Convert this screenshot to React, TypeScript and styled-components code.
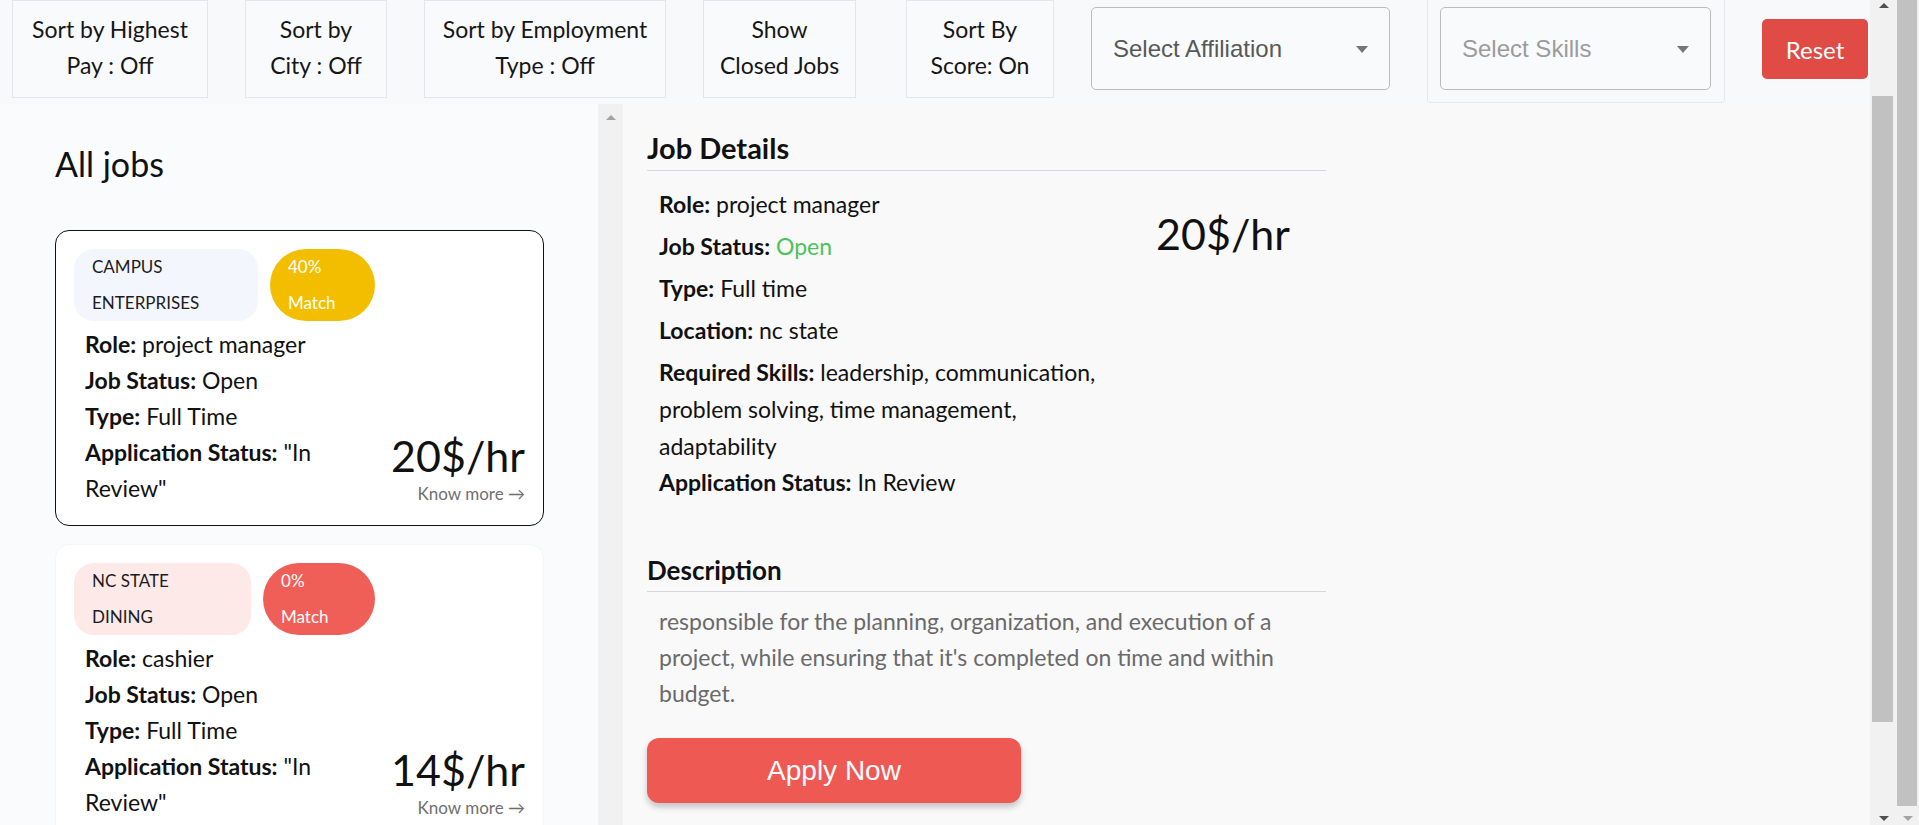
import React from 'react';
import styled, { createGlobalStyle } from 'styled-components';

interface Job {
  company: string;
  tagWidth: number;
  match: number;
  role: string;
  status: string;
  type: string;
  appStatus: string;
  pay: number;
}

const jobs: Job[] = [
  { company: 'CAMPUS ENTERPRISES', tagWidth: 184, match: 40, role: 'project manager', status: 'Open', type: 'Full Time', appStatus: '"In Review"', pay: 20 },
  { company: 'NC STATE DINING', tagWidth: 177, match: 0, role: 'cashier', status: 'Open', type: 'Full Time', appStatus: '"In Review"', pay: 14 },
];

const filters = [
  { label: 'Sort by Highest Pay : Off', width: 196, offset: 0 },
  { label: 'Sort by City : Off', width: 142, offset: 0 },
  { label: 'Sort by Employment Type : Off', width: 242, offset: 0 },
  { label: 'Show Closed Jobs', width: 153, offset: 0 },
  { label: 'Sort By Score: On', width: 148, offset: 13 },
];

const GlobalStyle = createGlobalStyle`
  body {
    margin: 0;
    font-family: Lato, "Noto Sans", sans-serif;
    color: #111;
    background: #f8f9fa;
  }
`;

const Shell = styled.div`
  display: flex;
  height: 100vh;
  overflow: hidden;
`;

const Page = styled.div`
  flex: 1;
  min-width: 0;
  display: flex;
  flex-direction: column;
  background: #f8f9fa;
`;

/* scrollbars, drawn to look like the browser's classic ones */
const Track = styled.div<{ $width: number }>`
  flex: 0 0 ${({ $width }) => $width}px;
  display: flex;
  flex-direction: column;
  background: #f1f1f1;
`;

const ArrowBox = styled.div<{ $height: number }>`
  flex: 0 0 ${({ $height }) => $height}px;
  display: flex;
  align-items: center;
  justify-content: center;
`;

const Arrow = styled.span<{ $down?: boolean; $color: string }>`
  width: 0;
  height: 0;
  border-left: 5px solid transparent;
  border-right: 5px solid transparent;
  ${({ $down, $color }) => ($down ? `border-top: 5px solid ${$color};` : `border-bottom: 5px solid ${$color};`)}
`;

const Thumb = styled.div<{ $top: number; $height: number; $inset: number }>`
  flex: 0 0 ${({ $height }) => $height}px;
  margin: ${({ $top }) => $top}px ${({ $inset }) => $inset + 2}px 0 ${({ $inset }) => $inset}px;
  background: #c1c1c1;
`;

const Filler = styled.div`
  flex: 1;
`;

const TopBar = styled.div`
  display: flex;
  align-items: flex-start;
  gap: 37px;
  flex: 0 0 104px;
  padding-left: 12px;
  box-sizing: border-box;
`;

const FilterButton = styled.button<{ $width: number; $offset: number }>`
  width: ${({ $width }) => $width}px;
  margin-left: ${({ $offset }) => $offset}px;
  height: 98px;
  padding: 0 14px 4px;
  border: 1px solid #e4e6ea;
  background: #f9fafb;
  font-family: Lato, "Noto Sans", sans-serif;
  font-size: 23px;
  line-height: 36px;
  color: #161616;
  text-align: center;
  cursor: pointer;
`;

const SelectBox = styled.div<{ $width: number; $placeholder?: boolean }>`
  width: ${({ $width }) => $width}px;
  height: 83px;
  margin-top: 7px;
  box-sizing: border-box;
  display: flex;
  align-items: center;
  justify-content: space-between;
  padding: 0 21px;
  border: 1px solid #bcbcbc;
  border-radius: 5px;
  background: #f9fafb;
  font-family: "Liberation Sans", Arial, sans-serif;
  font-size: 24px;
  color: ${({ $placeholder }) => ($placeholder ? '#9b9b9b' : '#585858')};
`;

const SelectFrame = styled.div`
  width: 298px;
  height: 103px;
  box-sizing: border-box;
  padding: 0 13px 0 12px;
  border: 1px solid #e6e8ec;
  border-top: none;
  border-radius: 0 0 4px 4px;

  ${SelectBox} {
    width: 100%;
  }
`;

const Caret = styled.span`
  width: 0;
  height: 0;
  border-left: 6.5px solid transparent;
  border-right: 6.5px solid transparent;
  border-top: 7px solid #767676;
  margin-top: 2px;
`;

const ResetButton = styled.button`
  width: 106px;
  height: 60px;
  margin-top: 19px;
  border: none;
  border-radius: 5px;
  background: #e04b45;
  color: #fff;
  font-family: Lato, "Noto Sans", sans-serif;
  font-size: 24px;
  cursor: pointer;
`;

const Main = styled.div`
  flex: 1;
  min-height: 0;
  display: flex;
`;

const ListPanel = styled.div`
  flex: 0 0 598px;
  overflow: hidden;
  box-sizing: border-box;
  padding-left: 55px;
  background: #f9fbfd;
`;

const ListTitle = styled.h2`
  margin: 38px 0 45px;
  font-size: 34px;
  font-weight: 400;
  line-height: 43px;
`;

const Card = styled.div<{ $active?: boolean }>`
  width: 489px;
  box-sizing: border-box;
  margin-bottom: 18px;
  padding: 18px 18px 19px;
  border: 1px solid ${({ $active }) => ($active ? '#111' : '#f4f6f9')};
  border-radius: 14px;
  background: #fff;
`;

const TagRow = styled.div`
  display: flex;
  gap: 12px;
  width: 301px;
  margin-bottom: 5px;
`;

const Tag = styled.span<{ $width: number; $bg: string }>`
  flex: 0 0 ${({ $width }) => $width}px;
  box-sizing: border-box;
  padding: 0 40px 0 18px;
  border-radius: 20px;
  background: ${({ $bg }) => $bg};
  font-size: 17px;
  line-height: 36px;
  color: #1c1c1c;
`;

const Badge = styled.span<{ $bg: string }>`
  flex: 1;
  box-sizing: border-box;
  padding: 0 28px 0 18px;
  border-radius: 36px;
  background: ${({ $bg }) => $bg};
  font-size: 17px;
  line-height: 36px;
  color: #fff;
`;

const CardBody = styled.div`
  display: flex;
  align-items: flex-end;
  justify-content: space-between;
`;

const CardInfo = styled.div`
  width: 250px;
  margin-left: 11px;
  font-size: 23px;
  line-height: 36px;
`;

const Label = styled.b`
  font-weight: 700;
`;

const PriceCol = styled.div`
  display: flex;
  flex-direction: column;
  align-items: flex-end;
  padding-bottom: 2px;
`;

const Price = styled.div`
  font-size: 43px;
  line-height: 1;
  font-weight: 400;
  white-space: nowrap;
`;

const DetailPrice = styled(Price)`
  margin-top: 26px;
`;

const KnowMore = styled.a`
  margin-top: 7px;
  font-size: 17px;
  line-height: 20px;
  color: #6f6f6f;
  text-decoration: none;
`;

const DetailsPanel = styled.div`
  flex: 1;
  padding: 27px 0 0 24px;
  background: #f9f9fa;
`;

const Section = styled.section`
  width: 679px;
`;

const SectionTitle = styled.h3<{ $size: number; $gap: number }>`
  margin: ${({ $gap }) => $gap}px 0 0;
  padding-bottom: 5px;
  border-bottom: 1px solid #d5d8de;
  font-size: ${({ $size }) => $size}px;
  font-weight: 700;
  line-height: ${({ $size }) => $size + 5}px;
`;

const DetailsBody = styled.div`
  display: flex;
  justify-content: space-between;
  padding: 15px 36px 0 12px;
`;

const DetailList = styled.ul`
  list-style: none;
  margin: 0;
  padding: 0;
  width: 465px;
`;

const DetailItem = styled.li<{ $after?: number }>`
  font-size: 23px;
  line-height: 37px;
  margin-bottom: ${({ $after }) => $after ?? 5}px;
`;

const StatusText = styled.span<{ $color: string }>`
  color: ${({ $color }) => $color};
`;

const Description = styled.p`
  margin: 11px 0 0;
  padding-left: 12px;
  font-size: 23px;
  line-height: 36px;
  color: #6a6a6a;
`;

const ApplyButton = styled.button`
  width: 374px;
  height: 65px;
  margin-top: 27px;
  border: none;
  border-radius: 12px;
  background: #ef5954;
  color: #fff;
  font-family: "Liberation Sans", Arial, sans-serif;
  font-size: 28px;
  box-shadow: 0 4px 6px rgba(0, 0, 0, 0.22);
  cursor: pointer;
`;

const JobCard: React.FC<{ job: Job; active?: boolean }> = ({ job, active }) => {
  const red = job.match < 20;
  return (
    <Card $active={active}>
      <TagRow>
        <Tag $width={job.tagWidth} $bg={red ? '#fde9e8' : '#f3f6fd'}>{job.company}</Tag>
        <Badge $bg={red ? '#f05e58' : '#f4be00'}>{job.match}% Match</Badge>
      </TagRow>
      <CardBody>
        <CardInfo>
          <div><Label>Role:</Label> {job.role}</div>
          <div><Label>Job Status:</Label> {job.status}</div>
          <div><Label>Type:</Label> {job.type}</div>
          <div><Label>Application Status:</Label> {job.appStatus}</div>
        </CardInfo>
        <PriceCol>
          <Price>{job.pay}$/hr</Price>
          <KnowMore href="#">Know more →</KnowMore>
        </PriceCol>
      </CardBody>
    </Card>
  );
};

const App: React.FC = () => {
  const job = jobs[0];
  return (
    <Shell>
      <GlobalStyle />
      <Page>
        <TopBar>
          {filters.map((f) => (
            <FilterButton key={f.label} $width={f.width} $offset={f.offset}>
              {f.label}
            </FilterButton>
          ))}
          <SelectBox $width={299}>
            Select Affiliation
            <Caret />
          </SelectBox>
          <SelectFrame>
            <SelectBox $width={273} $placeholder>
              Select Skills
              <Caret />
            </SelectBox>
          </SelectFrame>
          <ResetButton>Reset</ResetButton>
        </TopBar>
        <Main>
          <ListPanel>
            <ListTitle>All jobs</ListTitle>
            {jobs.map((j, i) => (
              <JobCard key={j.company} job={j} active={i === 0} />
            ))}
          </ListPanel>
          <Track $width={25}>
            <ArrowBox $height={26}>
              <Arrow $color="#a3a3a3" />
            </ArrowBox>
          </Track>
          <DetailsPanel>
            <Section>
              <SectionTitle $size={29} $gap={0}>Job Details</SectionTitle>
              <DetailsBody>
                <DetailList>
                  <DetailItem><Label>Role:</Label> {job.role}</DetailItem>
                  <DetailItem><Label>Job Status:</Label> <StatusText $color="#4cc25a">Open</StatusText></DetailItem>
                  <DetailItem><Label>Type:</Label> Full time</DetailItem>
                  <DetailItem><Label>Location:</Label> nc state</DetailItem>
                  <DetailItem $after={-1}>
                    <Label>Required Skills:</Label> leadership, communication, problem solving, time management, adaptability
                  </DetailItem>
                  <DetailItem><Label>Application Status:</Label> In Review</DetailItem>
                </DetailList>
                <DetailPrice>{job.pay}$/hr</DetailPrice>
              </DetailsBody>
              <SectionTitle $size={26} $gap={49}>Description</SectionTitle>
              <Description>
                responsible for the planning, organization, and execution of a project, while ensuring that it's
                completed on time and within budget.
              </Description>
              <ApplyButton>Apply Now</ApplyButton>
            </Section>
          </DetailsPanel>
        </Main>
      </Page>
      <Track $width={27}>
        <ArrowBox $height={10}>
          <Arrow $color="#505050" />
        </ArrowBox>
        <Thumb $top={86} $height={626} $inset={2} />
        <Filler />
        <ArrowBox $height={14}>
          <Arrow $down $color="#505050" />
        </ArrowBox>
      </Track>
      <Track $width={22}>
        <Thumb $top={0} $height={806} $inset={0} />
        <Filler />
        <ArrowBox $height={14}>
          <Arrow $down $color="#a3a3a3" />
        </ArrowBox>
      </Track>
    </Shell>
  );
};

export default App;
